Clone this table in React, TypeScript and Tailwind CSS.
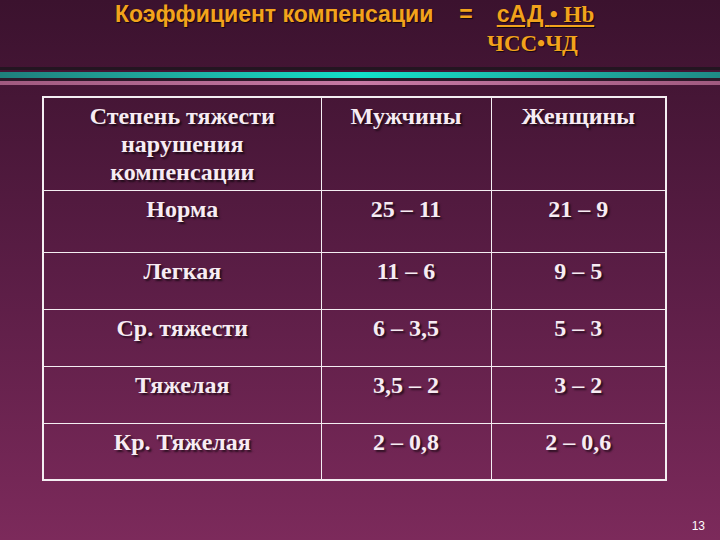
const ROWS = [
  ["Норма", "25 – 11", "21 – 9"],
  ["Легкая", "11 – 6", "9 – 5"],
  ["Ср. тяжести", "6 – 3,5", "5 – 3"],
  ["Тяжелая", "3,5 – 2", "3 – 2"],
  ["Кр. Тяжелая", "2 – 0,8", "2 – 0,6"],
]

const serif = "[font-family:'Liberation_Serif','Times_New_Roman',serif]"
const sans = "[font-family:'Liberation_Sans',Arial,sans-serif]"
const cellText = `${serif} font-bold text-[24px] leading-[28px] text-[#f7ecf3] [text-shadow:2px_2px_2px_rgba(0,0,0,0.6)] text-center align-top pt-[4px] border border-[#f4eef2]`

export default function App() {
  return (
    <div className="w-[720px] h-[540px] bg-gradient-to-b from-[#3b122e] via-[#5a1d45] to-[#7c2a5b] relative overflow-hidden">
      <div className="h-[67px]">
        <div className={`${sans} font-bold text-[23px] leading-[26px] text-[#f2a31c] [text-shadow:1px_1px_1px_rgba(0,0,0,0.7)] pt-[1px] pl-[115px] flex whitespace-pre`}>
          <span>Коэффициент компенсации</span>
          <span className="ml-[26px]">=</span>
          <span className="ml-[24px] underline underline-offset-[3px] decoration-2">
            сАД <span className={serif}>• Hb</span>
          </span>
        </div>
        <div className={`${serif} font-bold text-[23px] leading-[26px] text-[#f2a31c] [text-shadow:1px_1px_1px_rgba(0,0,0,0.7)] pl-[487px] pt-[3px]`}>
          ЧСС•ЧД
        </div>
      </div>
      <div className="h-[3px] bg-[#231521]" />
      <div className="h-[2px]" />
      <div className="h-[6px] bg-gradient-to-r from-[#1f7f7c] via-[#12e0cb] to-[#1f8a86]" />
      <div className="h-[3px] bg-[#2d1a2a]" />
      <div className="h-[4px] bg-gradient-to-r from-[#a05a80] via-[#c77aa5] to-[#a05a80]" />
      <div className="pl-[42px] pt-[11px]">
        <table className="border-collapse border-2 border-[#f4eef2] w-[623px] table-fixed">
          <colgroup>
            <col className="w-[278px]" />
            <col className="w-[170px]" />
            <col className="w-[175px]" />
          </colgroup>
          <tbody>
            <tr className="h-[93px]">
              <td className={cellText}>Степень тяжести<br />нарушения<br />компенсации</td>
              <td className={cellText}>Мужчины</td>
              <td className={cellText}>Женщины</td>
            </tr>
            {ROWS.map((r, i) => (
              <tr key={r[0]} className={i === 0 ? "h-[62px]" : "h-[57px]"}>
                {r.map((c, j) => (
                  <td key={j} className={cellText}>{c}</td>
                ))}
              </tr>
            ))}
          </tbody>
        </table>
      </div>
      <div className={`${sans} absolute right-[15px] bottom-[5px] text-[12px] text-white`}>13</div>
    </div>
  )
}
